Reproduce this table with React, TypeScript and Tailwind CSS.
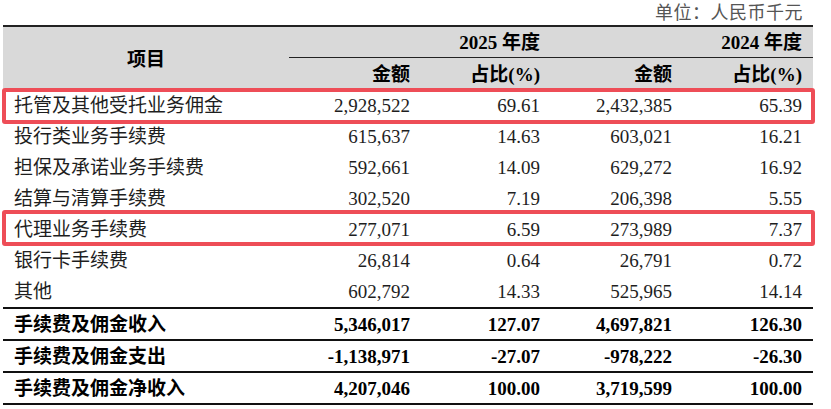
const rows = [
  { name: '托管及其他受托业务佣金', a: '2,928,522', b: '69.61', c: '2,432,385', d: '65.39', mark: 'first' },
  { name: '投行类业务手续费', a: '615,637', b: '14.63', c: '603,021', d: '16.21' },
  { name: '担保及承诺业务手续费', a: '592,661', b: '14.09', c: '629,272', d: '16.92' },
  { name: '结算与清算手续费', a: '302,520', b: '7.19', c: '206,398', d: '5.55' },
  { name: '代理业务手续费', a: '277,071', b: '6.59', c: '273,989', d: '7.37', mark: 'second' },
  { name: '银行卡手续费', a: '26,814', b: '0.64', c: '26,791', d: '0.72' },
  { name: '其他', a: '602,792', b: '14.33', c: '525,965', d: '14.14' },
];

const totals = [
  { name: '手续费及佣金收入', a: '5,346,017', b: '127.07', c: '4,697,821', d: '126.30' },
  { name: '手续费及佣金支出', a: '-1,138,971', b: '-27.07', c: '-978,222', d: '-26.30' },
  { name: '手续费及佣金净收入', a: '4,207,046', b: '100.00', c: '3,719,599', d: '100.00' },
];

const font = "font-['Liberation_Serif','Noto_Sans_CJK_SC',serif]";
const cols = 'grid grid-cols-[286px_132px_130px_132px_130px]';

export default function App() {
  return (
    <div className={`w-[831px] h-[409px] bg-white overflow-hidden text-[19px] leading-none ${font}`}>
      <div className="h-[25px] flex items-center justify-end pr-[28px] text-[18px] text-[#555] tracking-[0.5px]">单位：人民币千元</div>

      <div className="ml-[3px] w-[810px] border-t-2 border-[#222]">
        {/* header */}
        <div className={`${cols} bg-[#d9d9d9] text-black font-bold`}>
          <div className="row-span-2 flex items-center justify-center pt-[2px]">项目</div>
          <div className="col-span-2 h-[31px] flex items-center justify-end pr-[11px] border-b border-[#222]">2025 年度</div>
          <div className="col-span-2 h-[31px] flex items-center justify-end pr-[11px] border-b border-[#222]">2024 年度</div>
          <div className="h-[32px] flex items-center justify-end pr-[11px]">金额</div>
          <div className="h-[32px] flex items-center justify-end pr-[11px]">占比(%)</div>
          <div className="h-[32px] flex items-center justify-end pr-[11px]">金额</div>
          <div className="h-[32px] flex items-center justify-end pr-[11px]">占比(%)</div>
        </div>

        {/* body */}
        <div className="text-[#1e1e1e]">
          {rows.map((r) => (
            <div key={r.name} className={`${cols} h-[31px] items-center relative`}>
              <div className="pl-[11px]">{r.name}</div>
              <div className="text-right pr-[11px]">{r.a}</div>
              <div className="text-right pr-[11px]">{r.b}</div>
              <div className="text-right pr-[11px]">{r.c}</div>
              <div className="text-right pr-[11px]">{r.d}</div>
              {r.mark === 'first' && (
                <div className="absolute -top-[2px] -bottom-[3px] -left-[1px] -right-[2px] border-4 border-[#ee4d57] rounded-[3px]" />
              )}
              {r.mark === 'second' && (
                <div className="absolute -top-[4px] -bottom-[1px] -left-[1px] -right-[2px] border-4 border-[#ee4d57] rounded-[3px]" />
              )}
            </div>
          ))}
        </div>

        <div className="border-t-2 border-[#111] font-bold text-black">
          {totals.map((r) => (
            <div key={r.name} className={`${cols} h-[32px] items-center border-b-2 border-[#111]`}>
              <div className="pl-[11px]">{r.name}</div>
              <div className="text-right pr-[11px]">{r.a}</div>
              <div className="text-right pr-[11px]">{r.b}</div>
              <div className="text-right pr-[11px]">{r.c}</div>
              <div className="text-right pr-[11px]">{r.d}</div>
            </div>
          ))}
        </div>
      </div>
    </div>
  );
}
